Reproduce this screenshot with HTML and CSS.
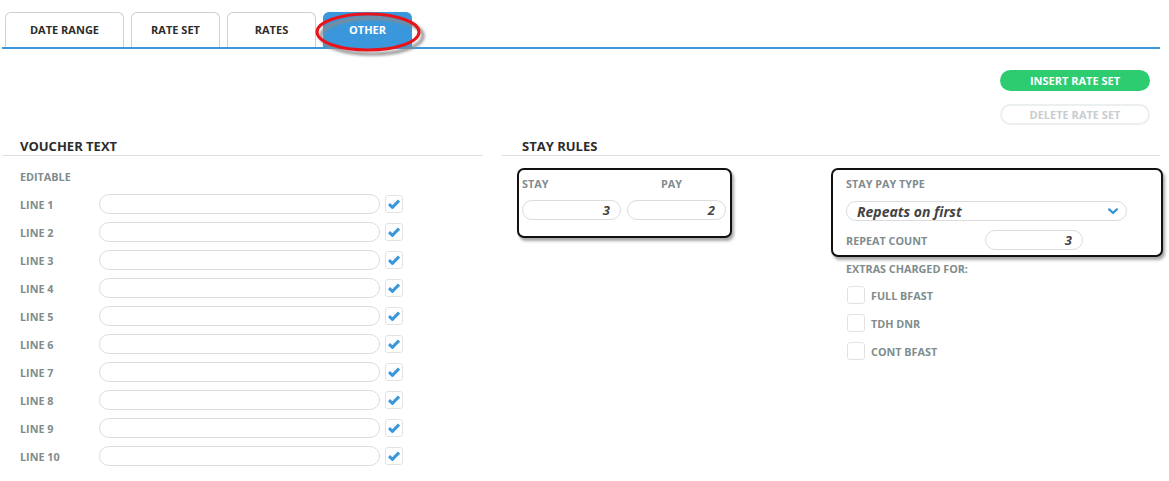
FILE: index.html
```html
<!DOCTYPE html>
<html>
<head>
<meta charset="utf-8">
<link rel="stylesheet" href="styles.css">
</head>
<body>
<div class="page">
  <div class="tabs">
    <div class="tab tab-wide">DATE RANGE</div>
    <div class="tab">RATE SET</div>
    <div class="tab">RATES</div>
    <div class="tab active">OTHER</div>
  </div>
  <svg class="ring" width="124" height="52" viewBox="0 0 124 52">
    <defs>
      <filter id="sh" x="-20%" y="-30%" width="140%" height="160%">
        <feGaussianBlur stdDeviation="1.6"/>
      </filter>
    </defs>
    <ellipse cx="64" cy="25" rx="51" ry="18" fill="none" stroke="#8a8a8a" stroke-width="3" filter="url(#sh)"/>
    <ellipse cx="60" cy="21" rx="51" ry="18" fill="none" stroke="#e8141b" stroke-width="3"/>
  </svg>

  <div class="actions">
    <button class="btn btn-insert">INSERT RATE SET</button>
    <button class="btn btn-delete">DELETE RATE SET</button>
  </div>

  <div class="main">
    <section class="col-left">
      <h2 class="heading">VOUCHER TEXT</h2>
      <div class="editable">EDITABLE</div>
      <div class="lines">
        <div class="line"><span class="lbl">LINE 1</span><span class="field wide"></span><span class="check on"><svg viewBox="0 0 12 10"><path d="M1 5.2 L4.4 8.4 L11 1.6" /></svg></span></div>
        <div class="line"><span class="lbl">LINE 2</span><span class="field wide"></span><span class="check on"><svg viewBox="0 0 12 10"><path d="M1 5.2 L4.4 8.4 L11 1.6" /></svg></span></div>
        <div class="line"><span class="lbl">LINE 3</span><span class="field wide"></span><span class="check on"><svg viewBox="0 0 12 10"><path d="M1 5.2 L4.4 8.4 L11 1.6" /></svg></span></div>
        <div class="line"><span class="lbl">LINE 4</span><span class="field wide"></span><span class="check on"><svg viewBox="0 0 12 10"><path d="M1 5.2 L4.4 8.4 L11 1.6" /></svg></span></div>
        <div class="line"><span class="lbl">LINE 5</span><span class="field wide"></span><span class="check on"><svg viewBox="0 0 12 10"><path d="M1 5.2 L4.4 8.4 L11 1.6" /></svg></span></div>
        <div class="line"><span class="lbl">LINE 6</span><span class="field wide"></span><span class="check on"><svg viewBox="0 0 12 10"><path d="M1 5.2 L4.4 8.4 L11 1.6" /></svg></span></div>
        <div class="line"><span class="lbl">LINE 7</span><span class="field wide"></span><span class="check on"><svg viewBox="0 0 12 10"><path d="M1 5.2 L4.4 8.4 L11 1.6" /></svg></span></div>
        <div class="line"><span class="lbl">LINE 8</span><span class="field wide"></span><span class="check on"><svg viewBox="0 0 12 10"><path d="M1 5.2 L4.4 8.4 L11 1.6" /></svg></span></div>
        <div class="line"><span class="lbl">LINE 9</span><span class="field wide"></span><span class="check on"><svg viewBox="0 0 12 10"><path d="M1 5.2 L4.4 8.4 L11 1.6" /></svg></span></div>
        <div class="line"><span class="lbl">LINE 10</span><span class="field wide"></span><span class="check on"><svg viewBox="0 0 12 10"><path d="M1 5.2 L4.4 8.4 L11 1.6" /></svg></span></div>
      </div>
    </section>

    <section class="col-right">
      <h2 class="heading">STAY RULES</h2>
      <div class="rules">
        <div class="box stay-box">
          <div class="stay-grid">
            <span class="lbl">STAY</span>
            <span class="lbl pay">PAY</span>
            <span class="field num">3</span>
            <span class="field num">2</span>
          </div>
        </div>
        <div class="type-col">
          <div class="box type-box">
            <div class="lbl">STAY PAY TYPE</div>
            <div class="field select">Repeats on first<svg class="chev" viewBox="0 0 10 7"><path d="M1.2 1.4 L5 5 L8.8 1.4"/></svg></div>
            <div class="repeat">
              <span class="lbl">REPEAT COUNT</span>
              <span class="field num count">3</span>
            </div>
          </div>
          <div class="extras">
            <div class="lbl extras-title">EXTRAS CHARGED FOR:</div>
            <div class="extra"><span class="check"></span><span class="lbl">FULL BFAST</span></div>
            <div class="extra"><span class="check"></span><span class="lbl">TDH DNR</span></div>
            <div class="extra"><span class="check"></span><span class="lbl">CONT BFAST</span></div>
          </div>
        </div>
      </div>
    </section>
  </div>
</div>
</body>
</html>
```

FILE: styles.css
```css
* { box-sizing: border-box; }

html, body {
  margin: 0;
  padding: 0;
  background: #ffffff;
}

body {
  font-family: "Open Sans", "Liberation Sans", sans-serif;
  color: #333;
}

.page {
  position: relative;
  width: 1169px;
  height: 481px;
  overflow: hidden;
}

/* Tabs */
.tabs {
  display: flex;
  gap: 7px;
  margin: 0 9px 0 2px;
  padding: 12px 0 0 3px;
  border-bottom: 2px solid #3a97db;
  height: 49px;
}

.tab {
  width: 89px;
  height: 35px;
  border: 1px solid #cfcfcf;
  border-bottom: none;
  border-radius: 6px 6px 0 0;
  background: #fff;
  font-size: 11px;
  font-weight: 700;
  color: #2c2c2c;
  display: flex;
  align-items: center;
  justify-content: center;
  padding-bottom: 2px;
}

.tab-wide { width: 119px; }

.tab.active {
  background: #3a97db;
  border-color: #3a97db;
  color: #fff;
}

.ring {
  position: absolute;
  left: 308px;
  top: 11px;
}

/* Actions */
.actions {
  display: flex;
  flex-direction: column;
  align-items: flex-end;
  gap: 13px;
  padding: 21px 19px 0 0;
  height: 89px;
}

.btn {
  font-family: inherit;
  font-size: 11px;
  font-weight: 700;
  width: 150px;
  height: 21px;
  border-radius: 11px;
  padding: 0;
  cursor: pointer;
}

.btn-insert {
  background: #2ecc71;
  border: none;
  color: #fff;
}

.btn-delete {
  background: #fff;
  border: 2px solid #eceff0;
  color: #c9cdd0;
}

/* Columns */
.main {
  display: flex;
  gap: 19px;
  margin: 0 9px 0 2px;
}

.col-left { width: 481px; flex: none; }
.col-right { flex: 1; min-width: 0; }

.heading {
  margin: 0;
  font-size: 13px;
  font-weight: 700;
  color: #2c2c2c;
  line-height: 17px;
  padding: 0 0 0 18px;
  border-bottom: 1px solid #dedfe6;
  height: 18px;
}

.col-right .heading { padding-left: 20px; }

.lbl {
  font-size: 10.8px;
  font-weight: 700;
  color: #7f8c8d;
  white-space: nowrap;
}

.editable {
  font-size: 10.8px;
  font-weight: 700;
  color: #7f8c8d;
  padding: 14px 0 0 18px;
  line-height: 14px;
}

.lines {
  padding: 6px 0 0 18px;
}

.line {
  display: flex;
  align-items: center;
  height: 28px;
}

.line .lbl { width: 79px; }

.field {
  display: flex;
  align-items: center;
  height: 20px;
  border: 1px solid #dcdcdc;
  border-radius: 10px;
  background: #fff;
}

.field.wide { width: 281px; }

.check {
  width: 18px;
  height: 18px;
  border: 1px solid #e2e2e2;
  border-radius: 3px;
  display: inline-flex;
  align-items: center;
  justify-content: center;
  margin-left: 5px;
  flex: none;
}

.check svg {
  width: 12px;
  height: 10px;
  fill: none;
  stroke: #3a97db;
  stroke-width: 3;
  stroke-linejoin: round;
}

/* Right */
.rules {
  display: flex;
  align-items: flex-start;
  padding: 12px 0 0 15px;
}

.box {
  border: 2px solid #111;
  border-radius: 7px;
  box-shadow: 2px 3px 3px rgba(0, 0, 0, 0.35);
  background: #fff;
  flex: none;
}

.stay-box {
  width: 215px;
  height: 70px;
  padding: 6px 3px 0 3px;
}

.stay-grid {
  display: grid;
  grid-template-columns: 99px 99px;
  column-gap: 6px;
  row-gap: 8px;
}

.stay-grid .lbl { line-height: 16px; }
.stay-grid .pay { padding-left: 34px; }

.num {
  justify-content: flex-end;
  padding-right: 10px;
  font-size: 13px;
  font-weight: 700;
  font-style: italic;
  color: #444;
}

.type-col {
  margin-left: 99px;
  flex: none;
}

.type-box {
  width: 332px;
  height: 89px;
  padding: 6px 0 0 13px;
}

.type-box > .lbl { line-height: 16px; }

.select {
  width: 281px;
  margin-top: 9px;
  padding: 0 8px 0 10px;
  font-size: 14px;
  font-weight: 700;
  font-style: italic;
  color: #444;
  justify-content: space-between;
}

.chev {
  width: 10px;
  height: 7px;
  fill: none;
  stroke: #3a97db;
  stroke-width: 2.4;
  stroke-linecap: round;
  stroke-linejoin: round;
}

.repeat {
  display: flex;
  align-items: center;
  margin-top: 9px;
}

.repeat .lbl { width: 139px; }

.count { width: 98px; }

.extras {
  padding: 4px 0 0 15px;
}

.extras-title { line-height: 16px; margin-bottom: 4px; }

.extra {
  display: flex;
  align-items: center;
  height: 28px;
}

.extra .check {
  margin-left: 1px;
  margin-right: 6px;
}
```
